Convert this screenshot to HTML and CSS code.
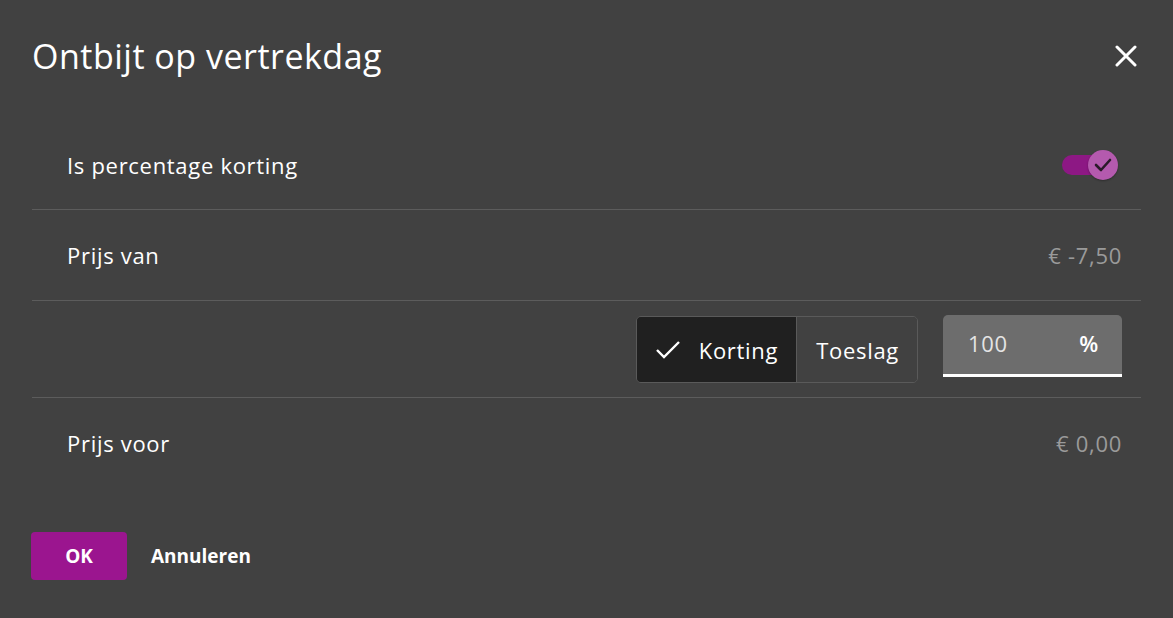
FILE: index.html
```html
<!DOCTYPE html>
<html>
<head>
<meta charset="utf-8">
<link rel="stylesheet" href="styles.css">
</head>
<body>
<div class="dialog">
  <div class="header">
    <h1 class="title">Ontbijt op vertrekdag</h1>
    <button class="close" aria-label="close">
      <svg width="22" height="22" viewBox="0 0 22 22"><path d="M2 2 L20 20 M20 2 L2 20" stroke="#fff" stroke-width="3" stroke-linecap="round"/></svg>
    </button>
  </div>
  <div class="rows">
    <div class="row row1">
      <span class="label">Is percentage korting</span>
      <div class="switch">
        <div class="track"></div>
        <div class="knob">
          <svg width="18" height="14" viewBox="0 0 18 14"><path d="M2 7 L7 12 L16 2" fill="none" stroke="#2b1a2a" stroke-width="2.6" stroke-linecap="round" stroke-linejoin="round"/></svg>
        </div>
      </div>
    </div>
    <div class="row">
      <span class="label">Prijs van</span>
      <span class="value">€ -7,50</span>
    </div>
    <div class="row row3">
      <div class="segmented">
        <div class="seg active">
          <svg width="26" height="20" viewBox="0 0 26 20"><path d="M2 10 L9 17 L24 2" fill="none" stroke="#fff" stroke-width="2.4"/></svg>
          <span>Korting</span>
        </div>
        <div class="seg">Toeslag</div>
      </div>
      <div class="field">
        <span class="num">100</span>
        <span class="pct">%</span>
      </div>
    </div>
    <div class="row last">
      <span class="label">Prijs voor</span>
      <span class="value">€ 0,00</span>
    </div>
  </div>
  <div class="actions">
    <button class="ok">OK</button>
    <button class="cancel">Annuleren</button>
  </div>
</div>
</body>
</html>
```
FILE: styles.css
```css
html, body {
  margin: 0;
  padding: 0;
  background: #414141;
  font-family: "Open Sans", "Noto Sans", sans-serif;
  color: #fff;
}
.dialog {
  width: 1173px;
  height: 618px;
  box-sizing: border-box;
  padding: 32px 32px 0 32px;
}
.header {
  display: flex;
  justify-content: space-between;
  align-items: center;
  height: 48px;
  margin-bottom: 40px;
}
.title {
  margin: 0;
  font-size: 34px;
  font-weight: 400;
  letter-spacing: 0.5px;
}
.close {
  background: none;
  border: none;
  padding: 0;
  margin-right: 4px;
  width: 22px;
  height: 22px;
  display: flex;
}
.rows {
  display: flex;
  flex-direction: column;
}
.row {
  display: flex;
  justify-content: space-between;
  align-items: center;
  height: 90px;
  padding: 0 19px 0 35px;
  border-bottom: 1px solid #5c5c5c;
}
.row1 { height: 89px; }
.row3 {
  justify-content: flex-end;
  height: 96px;
}
.row.last { border-bottom: none; }
.label {
  font-size: 22px;
  letter-spacing: 0.7px;
}
.value {
  font-size: 22px;
  letter-spacing: 0.7px;
  color: #9a9a9a;
}
.switch {
  position: relative;
  width: 56px;
  height: 32px;
  margin-right: 4px;
}
.track {
  position: absolute;
  left: 0;
  top: 6px;
  width: 44px;
  height: 20px;
  border-radius: 10px;
  background: #8d1884;
}
.knob {
  position: absolute;
  right: 0;
  top: 1px;
  width: 30px;
  height: 30px;
  border-radius: 50%;
  background: #b45aae;
  display: flex;
  align-items: center;
  justify-content: center;
  box-shadow: 0 1px 2px rgba(0,0,0,0.3);
}
.segmented {
  display: flex;
  height: 67px;
  box-sizing: border-box;
  border: 1px solid #5a5a5a;
  border-radius: 5px;
  overflow: hidden;
  margin-right: 25px;
  margin-top: 1px;
}
.seg {
  display: flex;
  align-items: center;
  padding: 0 18px 0 19px;
  font-size: 22px;
  letter-spacing: 0.7px;
  background: #414141;
}
.seg.active {
  background: #202020;
  border-right: 1px solid #5a5a5a;
  padding: 0 18px 0 18px;
  gap: 18px;
}
.field {
  width: 179px;
  height: 62px;
  box-sizing: border-box;
  background: #6d6d6d;
  border-radius: 5px 5px 0 0;
  border-bottom: 3px solid #fff;
  display: flex;
  justify-content: space-between;
  align-items: center;
  padding: 0 23px 4px 25px;
  margin-bottom: 6px;
  font-size: 22px;
  letter-spacing: 0.7px;
}
.num { color: #e4e4e4; }
.pct { color: #fff; font-weight: 600; }
.actions {
  display: flex;
  align-items: center;
  gap: 24px;
  margin-top: 44px;
  margin-left: -1px;
}
.ok {
  width: 96px;
  height: 48px;
  border: none;
  border-radius: 4px;
  background: #9b158f;
  color: #fff;
  font-family: inherit;
  font-size: 19px;
  font-weight: 700;
}
.cancel {
  background: none;
  border: none;
  padding: 0;
  color: #fff;
  font-family: inherit;
  font-size: 19px;
  font-weight: 700;
}
```
